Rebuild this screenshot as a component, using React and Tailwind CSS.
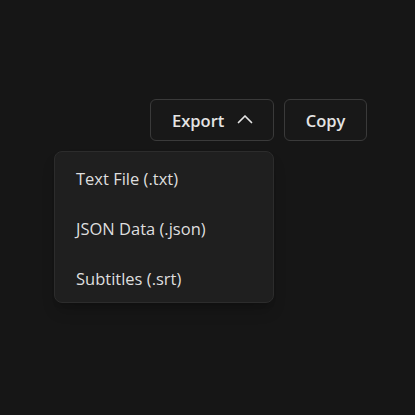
const items = ["Text File (.txt)", "JSON Data (.json)", "Subtitles (.srt)"];

const Chevron = () => (
  <svg width="16" height="16" viewBox="0 0 16 16" fill="none" className="-mt-[5px]">
    <path
      d="M1.5 11.5 8 5l6.5 6.5"
      stroke="currentColor"
      strokeWidth="1.7"
      strokeLinecap="round"
      strokeLinejoin="round"
    />
  </svg>
);

export default function App() {
  return (
    <div
      className="w-[415px] h-[415px] bg-[#161616] text-[#e4e4e4] flex justify-end pt-[99px] pr-12"
      style={{ fontFamily: '"Open Sans", "Noto Sans", sans-serif' }}
    >
      <div className="flex items-start gap-[10px]">
        <div className="relative">
          <button className="h-[42px] w-[124px] flex items-center pl-[21px] pt-[3px] gap-[13px] border border-[#3a3a3a] rounded-md bg-[#181818] text-[16.5px] font-semibold">
            <span>Export</span>
            <Chevron />
          </button>
          <div className="absolute right-0 top-[52px] w-[220px] rounded-lg border border-[#2c2c2c] bg-[#1f1f1f] shadow-lg shadow-black/20">
            {items.map((label) => (
              <div
                key={label}
                className="h-[50px] flex items-center pt-[4px] pl-[21px] text-[16.5px] text-[#dedede]"
              >
                {label}
              </div>
            ))}
          </div>
        </div>
        <button className="h-[42px] w-[83px] flex items-center justify-center pt-[3px] border border-[#3a3a3a] rounded-md bg-[#181818] text-[16.5px] font-semibold">
          Copy
        </button>
      </div>
    </div>
  );
}
